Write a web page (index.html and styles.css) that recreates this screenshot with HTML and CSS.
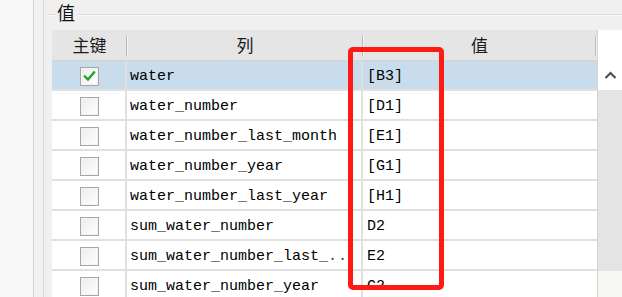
FILE: index.html
```html
<!DOCTYPE html>
<html lang="zh">
<head>
<meta charset="utf-8">
<link rel="stylesheet" href="styles.css">
</head>
<body>
<div class="window">
  <div class="strip"></div>
  <div class="strip2"></div>
  <div class="main">
    <div class="group-title">
      <span class="gline short"></span>
      <span class="glabel">值</span>
      <span class="gline long"></span>
    </div>
    <div class="table">
      <div class="grid">
        <div class="row head">
          <div class="hcell c1">主键</div>
          <div class="hcell c2">列</div>
          <div class="hcell c3">值</div>
        </div>
        <div class="row sel">
          <div class="cell c1"><span class="cb"><svg viewBox="0 0 19 19" width="19" height="19"><path d="M5 9.5 L8 12.5 L14 5.5" fill="none" stroke="#1fa32e" stroke-width="2.4" stroke-linecap="square"/></svg></span></div>
          <div class="cell c2">water</div>
          <div class="cell c3">[B3]</div>
        </div>
        <div class="row">
          <div class="cell c1"><span class="cb"></span></div>
          <div class="cell c2">water_number</div>
          <div class="cell c3">[D1]</div>
        </div>
        <div class="row">
          <div class="cell c1"><span class="cb"></span></div>
          <div class="cell c2">water_number_last_month</div>
          <div class="cell c3">[E1]</div>
        </div>
        <div class="row">
          <div class="cell c1"><span class="cb"></span></div>
          <div class="cell c2">water_number_year</div>
          <div class="cell c3">[G1]</div>
        </div>
        <div class="row">
          <div class="cell c1"><span class="cb"></span></div>
          <div class="cell c2">water_number_last_year</div>
          <div class="cell c3">[H1]</div>
        </div>
        <div class="row">
          <div class="cell c1"><span class="cb"></span></div>
          <div class="cell c2">sum_water_number</div>
          <div class="cell c3">D2</div>
        </div>
        <div class="row">
          <div class="cell c1"><span class="cb"></span></div>
          <div class="cell c2">sum_water_number_last_<span class="dots">..</span></div>
          <div class="cell c3">E2</div>
        </div>
        <div class="row">
          <div class="cell c1"><span class="cb"></span></div>
          <div class="cell c2">sum_water_number_year</div>
          <div class="cell c3">G2</div>
        </div>
      </div>
      <div class="vscroll">
        <div class="vs-top"></div>
        <div class="vs-btn"><svg viewBox="0 0 25 30" width="25" height="30"><path d="M7.5 18 L12.5 13 L17.5 18" fill="none" stroke="#505050" stroke-width="2.2"/></svg></div>
        <div class="vs-track"></div>
        <div class="vs-thumb"></div>
      </div>
    </div>
  </div>
</div>
<div class="mark"></div>
</body>
</html>
```
FILE: styles.css
```css
html, body {
  margin: 0;
  padding: 0;
}
body {
  width: 622px;
  height: 297px;
  overflow: hidden;
  background: #f0f0f0;
  font-family: "Liberation Mono", monospace;
  position: relative;
}
.window {
  display: flex;
  height: 297px;
}
.strip {
  width: 33px;
  background: #f8f8f8;
  border-right: 1px solid #d2d2d2;
}
.strip2 {
  width: 9px;
  background: #f1f1f1;
  border-right: 1px solid #dadada;
}
.main {
  flex: 1;
  display: flex;
  flex-direction: column;
  min-width: 0;
}
.group-title {
  height: 30px;
  display: flex;
  align-items: center;
  padding-left: 4px;
}
.gline {
  height: 1px;
  background: #dcdcdc;
  border-bottom: 1px solid #fafafa;
}
.gline.short { width: 8px; }
.gline.long { flex: 1; }
.glabel {
  font-family: "Noto Sans CJK SC", sans-serif;
  font-size: 18px;
  color: #111;
  padding: 0 3px 0 1px;
  line-height: 20px;
  margin-top: -6px;
}
.table {
  display: flex;
  margin-left: 8px;
  flex: 1;
  min-height: 0;
}
.grid {
  width: 545px;
  display: flex;
  flex-direction: column;
  background: #fff;
  border-right: 1px solid #d4d4d4;
}
.row {
  display: grid;
  grid-template-columns: 75px 236px 233px;
  height: 28px;
  border-bottom: 2px solid #e0e0e0;
  flex: none;
}
.row.head {
  height: 30px;
  border-top: none;
  border-bottom: 1px solid #d3d3d3;
  background: #e5e5e5;
}
.row.sel {
  background: #c9dcec;
}
.hcell {
  position: relative;
  display: flex;
  align-items: center;
  justify-content: center;
  font-family: "Noto Sans CJK SC", sans-serif;
  font-size: 17px;
  color: #1a1a1a;
  padding-bottom: 1px;
}
.hcell::after {
  content: "";
  position: absolute;
  right: 0;
  top: 6px;
  bottom: 4px;
  width: 1px;
  background: #b8b8b8;
  box-shadow: 1px 0 0 #f4f4f4;
}
.cell {
  display: flex;
  align-items: center;
  font-size: 15px;
  color: #000;
  white-space: nowrap;
  overflow: hidden;
  padding-top: 3px;
}
.cell.c1 {
  justify-content: center;
  border-right: 2px solid #e0e0e0;
  padding-left: 1px;
  padding-top: 2px;
}
.cell.c2 {
  padding-left: 3px;
  border-right: 2px solid #e0e0e0;
}
.cell.c3 {
  padding-left: 4px;
}
.dots {
  letter-spacing: 1px;
  color: #444;
}
.cb {
  width: 19px;
  height: 19px;
  box-sizing: border-box;
  border: 1px solid #a6a6a6;
  background: linear-gradient(135deg, #ececec 0%, #ffffff 100%);
  display: block;
  box-shadow: inset 0 0 0 1px #f4f4f4;
}
.cb svg {
  display: block;
  margin: -1px;
}
.vscroll {
  width: 24px;
  display: flex;
  flex-direction: column;
}
.vs-top {
  height: 30px;
  background: #fff;
}
.vs-btn {
  height: 30px;
  background: #fff;
}
.vs-btn svg { display: block; }
.vs-track {
  height: 181px;
  background: #e4e4e4;
}
.vs-thumb {
  flex: 1;
  background: #f6f6f3;
}
.mark {
  position: absolute;
  left: 348px;
  top: 47px;
  width: 96px;
  height: 243px;
  box-sizing: border-box;
  border: 5px solid #ff1a14;
  border-radius: 5px;
}
```
